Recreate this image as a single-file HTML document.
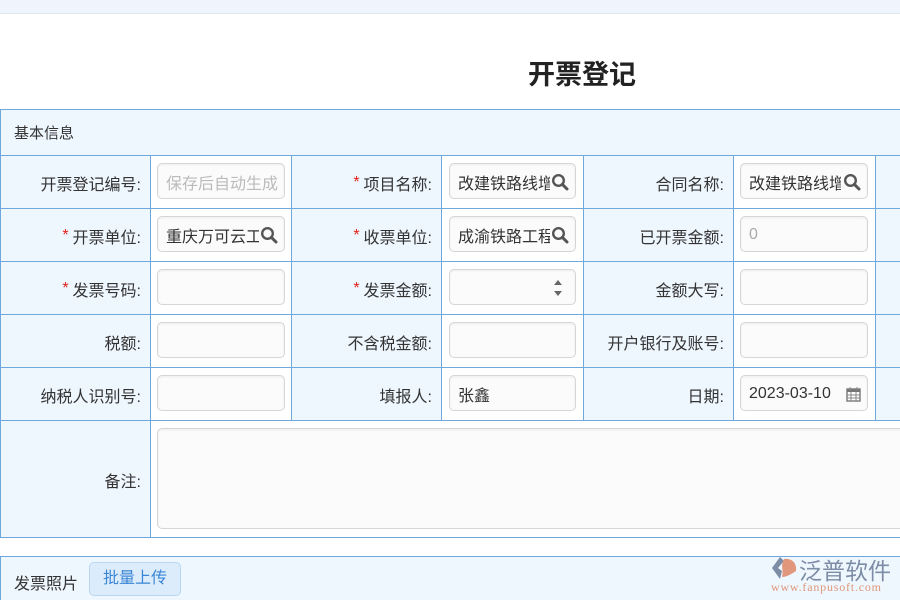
<!DOCTYPE html>
<html><head><meta charset="utf-8"><style>
*{box-sizing:border-box;margin:0;padding:0}
body{width:900px;height:600px;overflow:hidden;background:#fff;position:relative;font-family:"Liberation Sans","Noto Sans CJK SC",sans-serif;color:#333;font-size:15px}
.a{position:absolute}
.lab{position:absolute;background:#eef6fe;text-align:right;padding-right:9px;display:flex;align-items:center;justify-content:flex-end;font-size:16px;color:#333;padding-top:2px}
.h{position:absolute;height:1px;background:#6fa8dc}
.v{position:absolute;width:1px;background:#6fa8dc}
.in{position:absolute;height:36px;border:1px solid #d6d6d6;border-radius:5px;background:#fbfbfb;box-shadow:inset 0 1px 2px rgba(0,0,0,.06);font-size:16px;display:flex;align-items:center;padding-left:8px;padding-top:1px;white-space:nowrap;overflow:hidden;color:#333}
.t{display:block;overflow:hidden;white-space:nowrap}
.r{color:#e0211b;margin-right:4px}
.q{position:absolute;right:6px;top:9px}
</style></head><body>
<div class="a" style="left:0;top:0;width:900px;height:14px;background:#f0f5fd;border-bottom:1px solid #dfe6ef"></div>
<div class="a" style="left:528px;top:53px;font-size:27px;font-weight:bold;color:#222">开票登记</div>

<div class="a" style="left:0;top:109px;width:900px;height:46px;background:#eef6fe"></div>
<div class="a" style="left:14px;top:122px;font-size:15px">基本信息</div>

<div class="lab" style="left:1px;top:156px;width:149px;height:52px">开票登记编号:</div>
<div class="lab" style="left:292px;top:156px;width:149px;height:52px"><span class="r">*</span>项目名称:</div>
<div class="lab" style="left:584px;top:156px;width:149px;height:52px">合同名称:</div>
<div class="lab" style="left:1px;top:209px;width:149px;height:52px"><span class="r">*</span>开票单位:</div>
<div class="lab" style="left:292px;top:209px;width:149px;height:52px"><span class="r">*</span>收票单位:</div>
<div class="lab" style="left:584px;top:209px;width:149px;height:52px">已开票金额:</div>
<div class="lab" style="left:1px;top:262px;width:149px;height:52px"><span class="r">*</span>发票号码:</div>
<div class="lab" style="left:292px;top:262px;width:149px;height:52px"><span class="r">*</span>发票金额:</div>
<div class="lab" style="left:584px;top:262px;width:149px;height:52px">金额大写:</div>
<div class="lab" style="left:1px;top:315px;width:149px;height:52px">税额:</div>
<div class="lab" style="left:292px;top:315px;width:149px;height:52px">不含税金额:</div>
<div class="lab" style="left:584px;top:315px;width:149px;height:52px">开户银行及账号:</div>
<div class="lab" style="left:1px;top:368px;width:149px;height:52px">纳税人识别号:</div>
<div class="lab" style="left:292px;top:368px;width:149px;height:52px">填报人:</div>
<div class="lab" style="left:584px;top:368px;width:149px;height:52px">日期:</div>
<div class="lab" style="left:1px;top:421px;width:149px;height:116px">备注:</div>
<div class="a" style="left:876px;top:156px;width:24px;height:264px;background:#eef6fe"></div>

<div class="h" style="left:0;top:109px;width:900px"></div>
<div class="h" style="left:0;top:155px;width:900px"></div>
<div class="h" style="left:0;top:208px;width:900px"></div>
<div class="h" style="left:0;top:261px;width:900px"></div>
<div class="h" style="left:0;top:314px;width:900px"></div>
<div class="h" style="left:0;top:367px;width:900px"></div>
<div class="h" style="left:0;top:420px;width:900px"></div>
<div class="h" style="left:0;top:537px;width:900px"></div>
<div class="v" style="left:0;top:109px;height:429px"></div>
<div class="v" style="left:150px;top:155px;height:382px"></div>
<div class="v" style="left:291px;top:155px;height:265px"></div>
<div class="v" style="left:441px;top:155px;height:265px"></div>
<div class="v" style="left:583px;top:155px;height:265px"></div>
<div class="v" style="left:733px;top:155px;height:265px"></div>
<div class="v" style="left:875px;top:155px;height:265px"></div>

<svg width="0" height="0" style="position:absolute"><defs><symbol id="mg" viewBox="0 0 18 18"><circle cx="7.5" cy="7.5" r="5.3" fill="none" stroke="#555" stroke-width="2.4"/><path d="M11.3 11.3L16 16" stroke="#555" stroke-width="3" stroke-linecap="round"/></symbol></defs></svg>

<div class="in" style="left:157px;top:163px;width:128px;color:#bbb"><span class="t" style="width:118px">保存后自动生成</span></div>
<div class="in" style="left:449px;top:163px;width:127px"><span class="t" style="width:92px">改建铁路线增</span><svg class="q" width="18" height="18"><use href="#mg"/></svg></div>
<div class="in" style="left:740px;top:163px;width:128px"><span class="t" style="width:92px">改建铁路线增</span><svg class="q" width="18" height="18"><use href="#mg"/></svg></div>
<div class="in" style="left:157px;top:216px;width:128px"><span class="t" style="width:93px">重庆万可云工</span><svg class="q" width="18" height="18"><use href="#mg"/></svg></div>
<div class="in" style="left:449px;top:216px;width:127px"><span class="t" style="width:92px">成渝铁路工程</span><svg class="q" width="18" height="18"><use href="#mg"/></svg></div>
<div class="in" style="left:740px;top:216px;width:128px;color:#aaa">0</div>
<div class="in" style="left:157px;top:269px;width:128px"></div>
<div class="in" style="left:449px;top:269px;width:127px"><svg class="a" style="right:12px;top:9px" width="10" height="18"><path d="M1 6L5 1 9 6Z M1 12L5 17 9 12Z" fill="#666"/></svg></div>
<div class="in" style="left:740px;top:269px;width:128px"></div>
<div class="in" style="left:157px;top:322px;width:128px"></div>
<div class="in" style="left:449px;top:322px;width:127px"></div>
<div class="in" style="left:740px;top:322px;width:128px"></div>
<div class="in" style="left:157px;top:375px;width:128px"></div>
<div class="in" style="left:449px;top:375px;width:127px">张鑫</div>
<div class="in" style="left:740px;top:375px;width:128px">2023-03-10<svg class="a" style="right:6px;top:10px" width="15" height="16"><rect x="1" y="3" width="13" height="12" fill="#fff" stroke="#777" stroke-width="1.4"/><rect x="1" y="3" width="13" height="3" fill="#777"/><path d="M4 1v3M11 1v3M1 9h13M1 12h13M5 6v9M10 6v9" stroke="#888" stroke-width="1"/></svg></div>
<div class="in" style="left:157px;top:428px;width:760px;height:101px"></div>

<div class="a" style="left:0;top:556px;width:900px;height:44px;background:#eef6fe;border-top:1px solid #6fa8dc;border-left:1px solid #6fa8dc"></div>
<div class="a" style="left:14px;top:570px;font-size:16px">发票照片</div>
<div class="a" style="left:89px;top:562px;width:92px;height:34px;background:#dcecfb;border:1px solid #b9d6f2;border-radius:5px;color:#3a86d6;font-size:16px;line-height:32px;text-align:center">批量上传</div>

<svg class="a" style="left:770px;top:555px" width="30" height="26"><path d="M10 2L2 13 10 24 12 16 8 13 14 6Z" fill="#7e8da6"/><path d="M14 4C22 3 27 8 26 16 20 20 16 22 12 22 14 14 10 12 14 4Z" fill="#e0977b"/></svg>
<div class="a" style="left:799px;top:552px;font-size:23px;color:#7e8da6;letter-spacing:0px">泛普软件</div>
<div class="a" style="left:771px;top:580px;font-size:12px;color:#e0977b;font-family:'Liberation Serif',serif;letter-spacing:0.8px">www.fanpusoft.com</div>
</body></html>
